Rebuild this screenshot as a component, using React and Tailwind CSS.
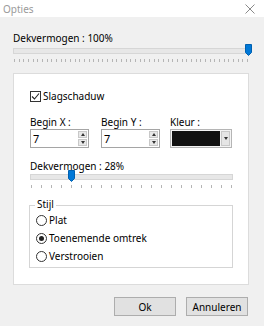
import React from 'react';

const font = { fontFamily: '"Noto Sans", "Open Sans", sans-serif' };

function Ticks({ count }) {
  return (
    <div className="flex justify-between h-[3px]">
      {Array.from({ length: count }).map((_, i) => (
        <div key={i} className="w-px h-[3px] bg-[#b5b5b5]" />
      ))}
    </div>
  );
}

function Slider({ pos, ticks }) {
  return (
    <div className="relative">
      <div className="h-[6px] bg-[#e7e7e7] border border-[#d6d6d6]" />
      <svg
        className="absolute top-[-4px]"
        style={{ left: pos }}
        width="7"
        height="12"
        viewBox="0 0 7 12"
      >
        <path d="M0.5 0.5 H6.5 V8.5 L3.5 11.5 L0.5 8.5 Z" fill="#0078d7" stroke="#0060b0" strokeWidth="1" />
      </svg>
      <div className="mt-[5px] px-[1px]">
        <Ticks count={ticks} />
      </div>
    </div>
  );
}

function SpinBox({ value }) {
  return (
    <div className="flex items-center w-[59px] h-[19px] border border-[#a5a5a5] bg-white pl-[2px] pr-[1px]">
      <span className="flex-1 text-[11px] leading-none text-black">{value}</span>
      <div className="flex flex-col gap-[1px]">
        <div className="w-[9px] h-[7px] bg-[#e8e8e8] border border-[#c8c8c8] flex items-center justify-center">
          <div className="w-0 h-0 border-l-[2px] border-r-[2px] border-b-[3px] border-l-transparent border-r-transparent border-b-[#333]" />
        </div>
        <div className="w-[9px] h-[7px] bg-[#e8e8e8] border border-[#c8c8c8] flex items-center justify-center">
          <div className="w-0 h-0 border-l-[2px] border-r-[2px] border-t-[3px] border-l-transparent border-r-transparent border-t-[#333]" />
        </div>
      </div>
    </div>
  );
}

function Radio({ label, checked }) {
  return (
    <div className="flex items-center h-[18px]">
      <div className="w-[11px] h-[11px] rounded-full border border-[#333] bg-white flex items-center justify-center">
        {checked && <div className="w-[5px] h-[5px] rounded-full bg-[#222]" />}
      </div>
      <span className="ml-[2px] text-[10px] leading-[13px] text-black">{label}</span>
    </div>
  );
}

export default function App() {
  return (
    <div className="w-[264px] h-[326px] bg-[#f0f0f0] overflow-hidden" style={font}>
      {/* title bar */}
      <div className="h-[17px] bg-white flex items-center justify-between pl-[3px] pr-[9px]">
        <span className="text-[10px] text-[#9a9a9a] leading-none">Opties</span>
        <svg width="10" height="10" viewBox="0 0 10 10">
          <path d="M0.5 0.5 L9.5 9.5 M9.5 0.5 L0.5 9.5" stroke="#8a8a8a" strokeWidth="1" />
        </svg>
      </div>

      <div className="px-[13px] pr-[15px]">
        <div className="mt-[15px] text-[10px] leading-[13px] text-black">Dekvermogen : 100%</div>
        <div className="mt-[3px]">
          <Slider pos={232} ticks={51} />
        </div>

        {/* white panel */}
        <div className="mt-[11px] h-[212px] bg-white border border-[#dcdcdc] pl-[16px] pr-[15px]">
          <div className="mt-[16px] flex items-center">
            <div className="w-[11px] h-[11px] border border-[#333] flex items-center justify-center">
              <svg width="9" height="9" viewBox="0 0 9 9">
                <path d="M1 4.5 L3.5 7 L8 1.5" fill="none" stroke="#222" strokeWidth="1.1" />
              </svg>
            </div>
            <span className="ml-[2px] text-[10px] leading-[13px] text-black">Slagschaduw</span>
          </div>

          <div className="mt-[13px] flex">
            <div className="w-[71px]">
              <div className="text-[10px] leading-[13px] text-black">Begin X :</div>
              <SpinBox value="7" />
            </div>
            <div className="w-[69px]">
              <div className="text-[10px] leading-[13px] text-black">Begin Y :</div>
              <SpinBox value="7" />
            </div>
            <div>
              <div className="text-[10px] leading-[13px] text-black">Kleur :</div>
              <div className="flex items-center w-[62px] h-[19px] border border-[#b5b5b5] bg-[#f4f4f4] p-[1px]">
                <div className="w-[48px] h-full bg-[#111]" />
                <div className="ml-[1px] flex-1 h-full bg-[#e5e5e5] border border-[#c8c8c8] flex items-center justify-center">
                  <div className="w-0 h-0 border-l-[2px] border-r-[2px] border-t-[3px] border-l-transparent border-r-transparent border-t-[#333]" />
                </div>
              </div>
            </div>
          </div>

          <div className="mt-[12px] text-[10px] leading-[13px] text-black">Dekvermogen : 28%</div>
          <div className="mt-[1px]">
            <Slider pos={38} ticks={21} />
          </div>

          {/* Stijl group */}
          <div className="relative mt-[17px] ml-[-1px] h-[63px] border border-[#d5d5d5] pl-[6px] pt-[5px]">
            <span className="absolute top-[-8px] left-[5px] bg-white px-[2px] text-[10px] leading-[13px] text-black">Stijl</span>
            <Radio label="Plat" />
            <Radio label="Toenemende omtrek" checked />
            <Radio label="Verstrooien" />
          </div>
        </div>

        <div className="mt-[12px] flex justify-end gap-[10px] pr-[1px]">
          <button className="w-[62px] h-[19px] bg-[#e1e1e1] border border-[#adadad] text-[10px] leading-none text-black">Ok</button>
          <button className="w-[62px] h-[19px] bg-[#e1e1e1] border border-[#adadad] text-[10px] leading-none text-black">Annuleren</button>
        </div>
      </div>
    </div>
  );
}
